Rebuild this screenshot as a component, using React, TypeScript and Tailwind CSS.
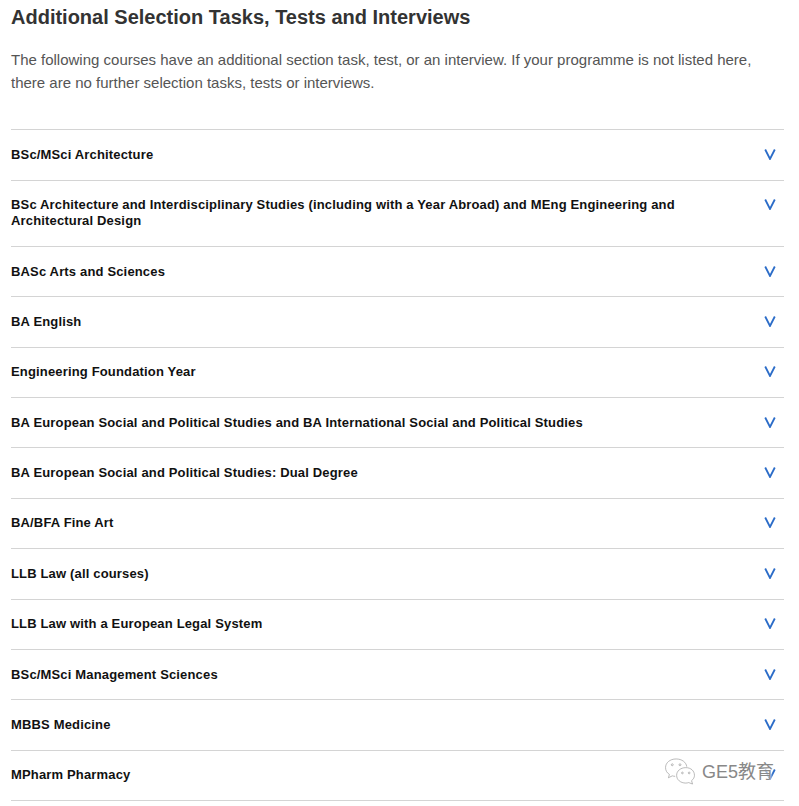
const courses = [
  "BSc/MSci Architecture",
  "BSc Architecture and Interdisciplinary Studies (including with a Year Abroad) and MEng Engineering and Architectural Design",
  "BASc Arts and Sciences",
  "BA English",
  "Engineering Foundation Year",
  "BA European Social and Political Studies and BA International Social and Political Studies",
  "BA European Social and Political Studies: Dual Degree",
  "BA/BFA Fine Art",
  "LLB Law (all courses)",
  "LLB Law with a European Legal System",
  "BSc/MSci Management Sciences",
  "MBBS Medicine",
  "MPharm Pharmacy",
];

function Chevron() {
  return (
    <svg width="12" height="11" viewBox="0 0 12 11" fill="none" className="mt-[2px] shrink-0">
      <path d="M1.2 0.5 L6 10 L10.8 0.5" stroke="#2b6cc8" strokeWidth="1.8" />
    </svg>
  );
}

function Watermark() {
  return (
    <div className="absolute left-[664px] top-[758px] flex items-center gap-[6px]">
      <svg width="32" height="27" viewBox="0 0 32 28" fill="none" stroke="#9a9a9a" strokeWidth="0.7">
        <path d="M12 1 C5.5 1 1 5 1 10 C1 13 2.5 15.5 5 17 L4 20.5 L8 18.5 C9 18.8 10 19 11 19" fill="#ffffff" />
        <path d="M12 1 C18 1 22.5 4.5 23 9" />
        <path d="M22 10 C16.5 10 12.5 13.5 12.5 18 C12.5 22.5 16.5 26 22 26 C23 26 24 25.8 25 25.5 L29 27 L28 23.5 C30 22 31 20 31 18 C31 13.5 27.5 10 22 10 Z" fill="#ffffff" />
        <circle cx="8" cy="7" r="1" />
        <circle cx="16" cy="7" r="1" />
        <circle cx="18.5" cy="15.5" r="0.9" />
        <circle cx="25.5" cy="15.5" r="0.9" />
      </svg>
      <span className="font-['Liberation_Sans','Noto_Sans_CJK_SC',sans-serif] text-[18px] leading-none text-[#888888] [text-shadow:0_0_2px_#ffffff,0_0_2px_#ffffff]">
        GE5教育
      </span>
    </div>
  );
}

export default function App() {
  return (
    <div className="relative h-[806px] w-[799px] overflow-hidden bg-white pl-[11px] pr-[15px] font-['Liberation_Sans',Arial,sans-serif]">
      <h2 className="pt-[5px] text-[20px] leading-[24px] font-bold text-[#333333]">
        Additional Selection Tasks, Tests and Interviews
      </h2>
      <p className="mt-[19px] text-[15px] leading-[23px] text-[#555555]">
        The following courses have an additional section task, test, or an interview. If your programme is not listed here, there are no further selection tasks, tests or interviews.
      </p>
      <div className="mt-[35.125px] border-t border-[#d4d4d4]">
        {courses.map((c) => (
          <div key={c} className="flex items-start justify-between border-b border-[#d4d4d4] py-[16.7px]">
            <div className="w-[680px] text-[13px] leading-[16px] font-bold tracking-[0.16px] text-[#111111]">{c}</div>
            <div className="pr-[8px]">
              <Chevron />
            </div>
          </div>
        ))}
      </div>
      <Watermark />
    </div>
  );
}
